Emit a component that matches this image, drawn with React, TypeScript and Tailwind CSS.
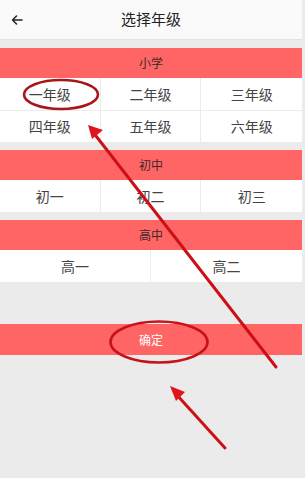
const font = { fontFamily: '"Noto Sans CJK SC", "Noto Sans", sans-serif' };

const sections = [
  { title: "小学", cols: 3, items: ["一年级", "二年级", "三年级", "四年级", "五年级", "六年级"] },
  { title: "初中", cols: 3, items: ["初一", "初二", "初三"] },
  { title: "高中", cols: 2, items: ["高一", "高二"] },
];

function Section({ title, cols, items }: { title: string; cols: number; items: string[] }) {
  return (
    <div className="mt-2 first:mt-[6px]">
      <div className="flex h-[30px] items-center justify-center bg-[#ff6565] text-[12px] text-[#3a2a2a]">
        {title}
      </div>
      <div className={cols === 3 ? "grid grid-cols-3 bg-white" : "grid grid-cols-2 bg-white"}>
        {items.map((it, i) => (
          <div
            key={it}
            className={
              "flex h-[32px] items-center justify-center border-[#ececec] text-[14px] text-[#444] " +
              ((i + 1) % cols !== 0 ? "border-r " : "") +
              (i >= cols ? "border-t" : "")
            }
          >
            {it}
          </div>
        ))}
      </div>
    </div>
  );
}

export default function App() {
  return (
    <div className="relative min-h-[478px] w-[305px] overflow-hidden bg-[#ebebeb]" style={font}>
      <div className="w-[302px]">
        <div className="relative flex h-[40px] items-center justify-center border-b border-[#e2e2e2] bg-[#fafafa]">
          <svg className="absolute left-[11px] top-[14px]" width="12" height="12" viewBox="0 0 12 12" fill="none">
            <path d="M11 6H1.5M5.5 2L1.5 6l4 4" stroke="#222" strokeWidth="1.5" strokeLinecap="round" strokeLinejoin="round" />
          </svg>
          <span className="text-[15px] text-[#222]">选择年级</span>
        </div>

        {sections.map((s) => (
          <Section key={s.title} {...s} />
        ))}

        <div className="mt-[42px] flex h-[31px] items-center justify-center bg-[#ff6565] text-[12px] text-white">
          确定
        </div>
      </div>

      <svg className="pointer-events-none absolute left-0 top-0" width="305" height="478" viewBox="0 0 305 478" fill="none">
        <ellipse cx="61" cy="94.5" rx="37" ry="14.5" stroke="#a8161a" strokeWidth="2.6" />
        <ellipse cx="159" cy="342" rx="48.5" ry="20.5" stroke="#c8121a" strokeWidth="2.6" />
        <line x1="276" y1="367" x2="96" y2="136" stroke="#cc1016" strokeWidth="3" strokeLinecap="round" />
        <polygon points="88,125 103,130 92,139" fill="#e0141a" />
        <line x1="225" y1="448" x2="176" y2="394" stroke="#cc1016" strokeWidth="3" strokeLinecap="round" />
        <polygon points="170,386 185,392 176,401" fill="#e0141a" />
      </svg>
    </div>
  );
}
